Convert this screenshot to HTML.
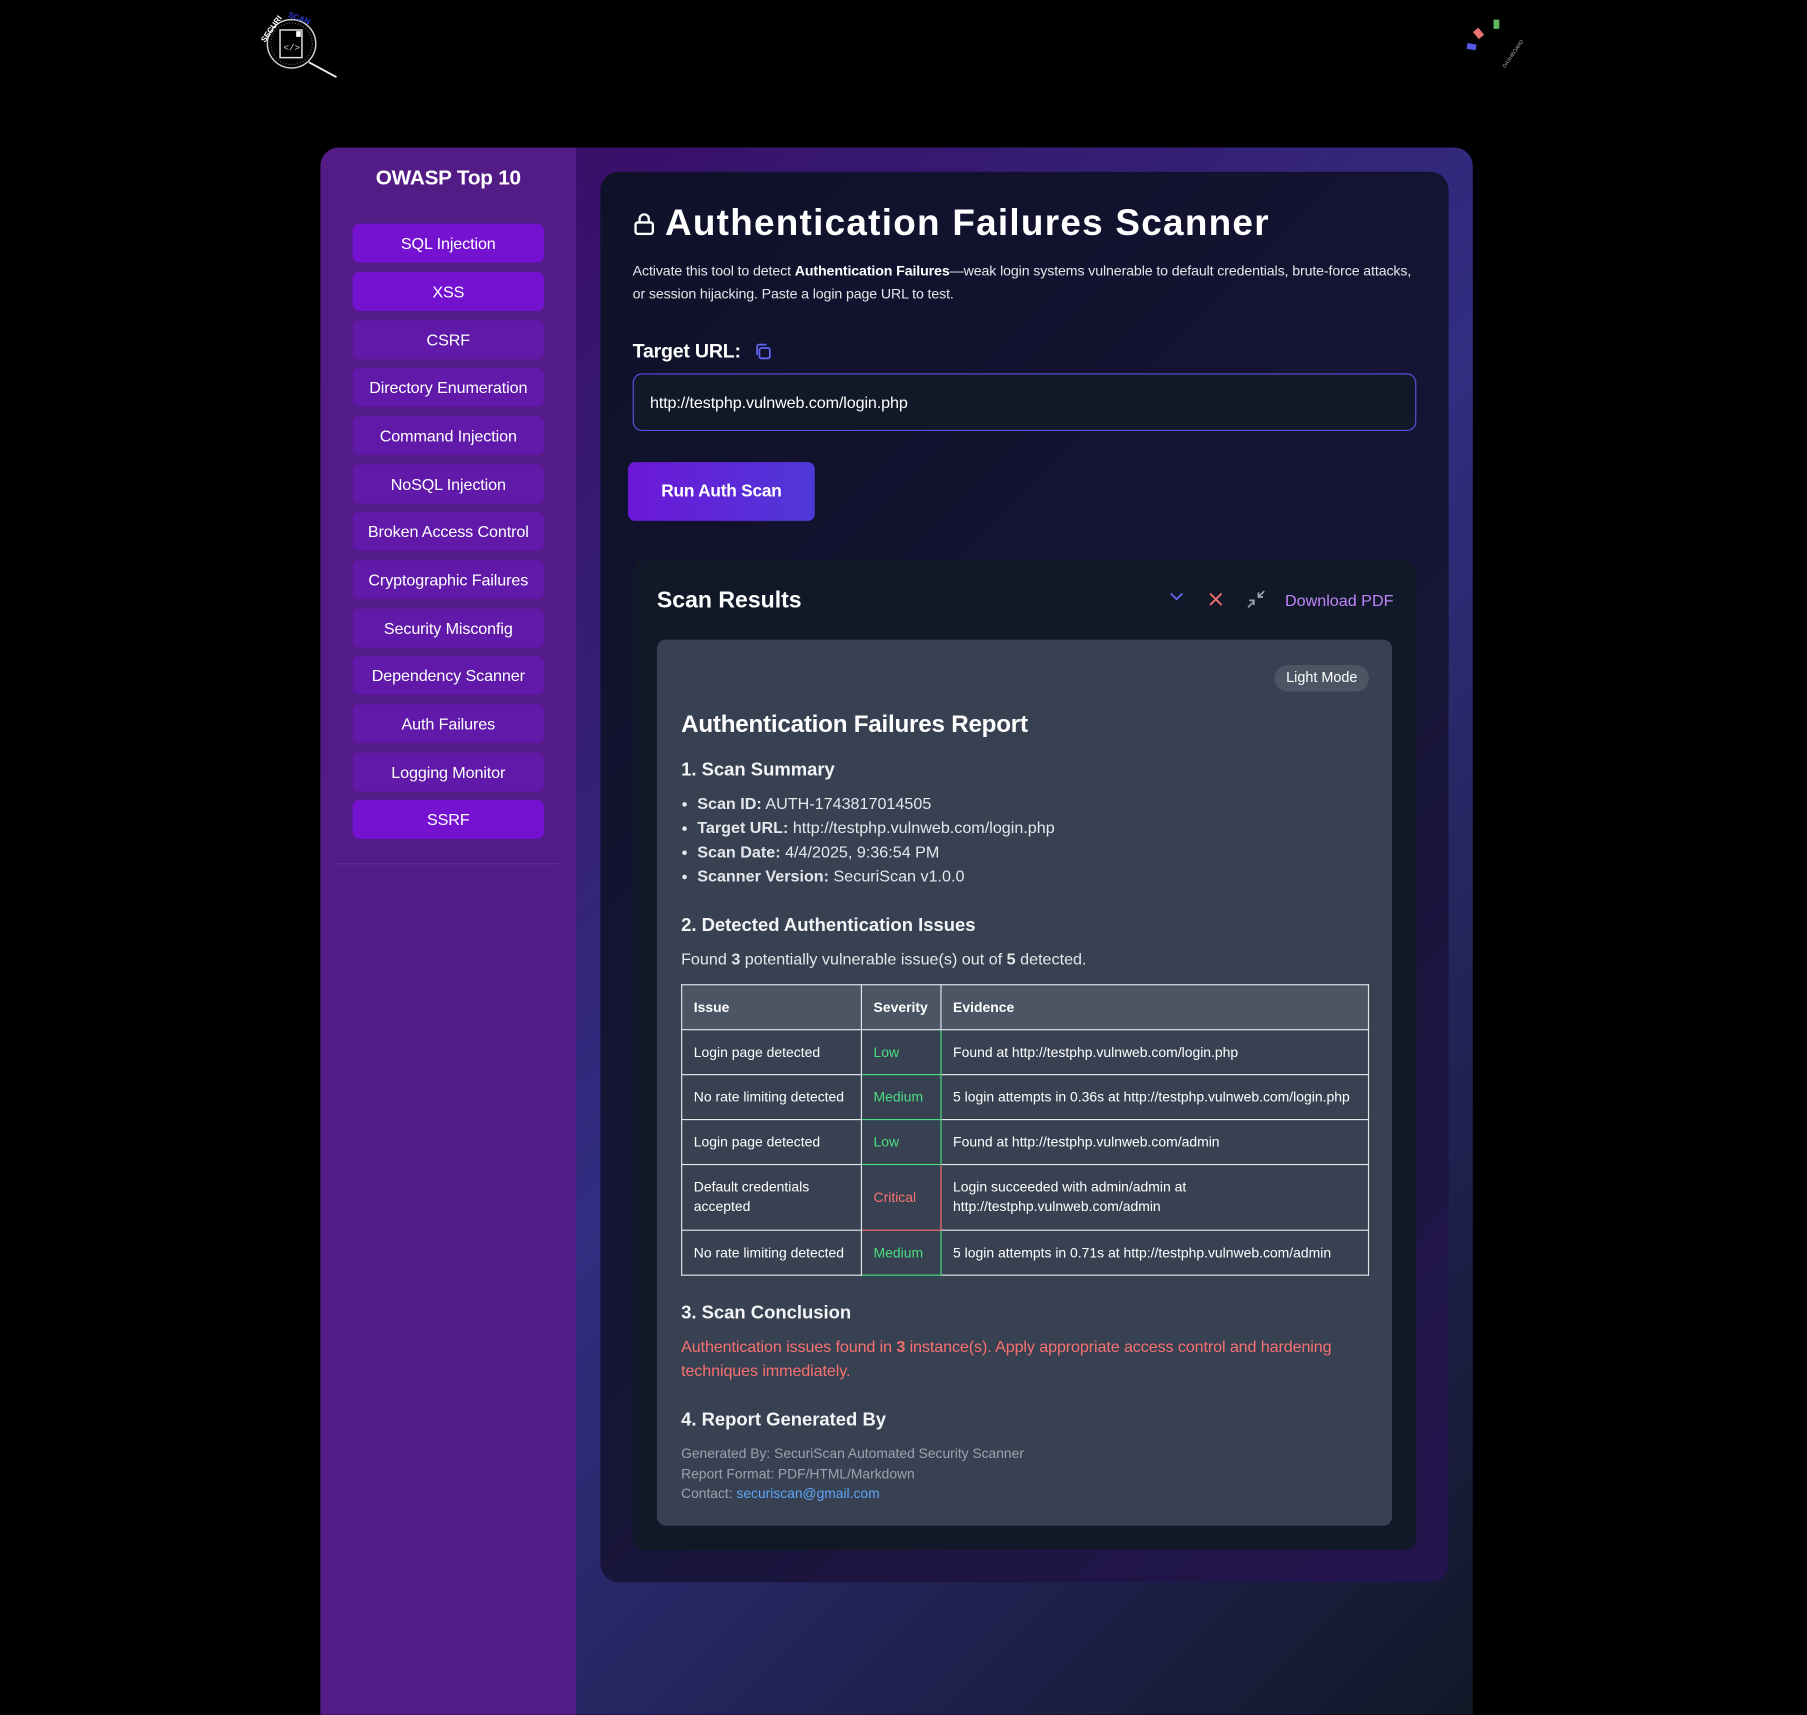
<!DOCTYPE html>
<html><head><meta charset="utf-8"><style>
*{box-sizing:border-box;margin:0;padding:0}
html,body{width:1807px;height:1702px;overflow:hidden;background:#000;font-family:"Liberation Sans",Arial,sans-serif;color:#fff}
#w{position:absolute;left:0;top:0;width:1568px;height:1477px;transform:scale(1.15242);transform-origin:0 0}
.a{position:absolute}
#box{left:278px;top:128px;width:1000px;height:1360px;border-radius:16px 16px 0 0;overflow:hidden;background:linear-gradient(135deg,#3b0764 0%,#312e81 50%,#111827 100%)}
#side{left:0;top:0;width:222px;height:100%;background:#521b85}
.btn{position:absolute;left:28px;width:166px;height:34px;border-radius:6px;background:#6019a8;font-size:14px;text-align:center;line-height:34px;letter-spacing:-0.1px}
.btn.b{background:#7412d0}
#card{left:243px;top:21px;width:736px;height:1224px;border-radius:16px;background:linear-gradient(135deg,#0f1129 0%,#171538 60%,#25154f 100%)}
table{border-collapse:collapse;font-size:12.1px;width:597px}
td,th{border:1px solid #e5e7eb;padding:0 10px;text-align:left;color:#fff}
th{background:#4b5563;height:39px;font-weight:bold}
td{height:39px;line-height:17px}
.g{color:#4ade80;border-color:#4ade80}
.r{color:#f87171;border-color:#f87171}
li{list-style:none;position:relative;padding-left:14px;height:21px;font-size:14px;color:#e5e7eb}
li:before{content:"";position:absolute;left:1px;top:7px;width:4px;height:4px;border-radius:50%;background:#e5e7eb}
h3{font-size:16px;font-weight:bold;color:#f3f4f6}
</style></head><body><div id="w">
<svg class="a" style="left:220px;top:4px" width="76" height="66" viewBox="0 0 76 66">
<circle cx="33" cy="34" r="21" fill="none" stroke="#ccc" stroke-width="1.3"/>
<circle cx="33" cy="34" r="18" fill="none" stroke="#666" stroke-width="0.8" stroke-dasharray="1 1.5"/>
<rect x="23" y="22" width="19" height="24" fill="none" stroke="#ddd" stroke-width="1.3"/>
<rect x="37" y="23" width="4" height="5" fill="#fff"/>
<text x="26" y="40" font-size="8" fill="#ddd" font-family="Liberation Mono">&lt;/&gt;</text>
<line x1="48" y1="50" x2="72" y2="63" stroke="#eee" stroke-width="1.6"/>
<text x="4" y="30" font-size="7" font-weight="bold" fill="#fff" transform="rotate(-55 10 26)">SECURI</text>
<text x="30" y="12" font-size="7" font-weight="bold" fill="#2b3bd0" transform="rotate(20 34 10)">SCAN</text>
</svg>
<svg class="a" style="left:1268px;top:12px" width="56" height="50" viewBox="0 0 56 50">
<rect x="28" y="5" width="5" height="8" fill="#5fb860"/>
<rect x="12" y="13" width="6" height="8" fill="#e9756e" transform="rotate(-40 15 17)"/>
<rect x="5" y="26" width="8" height="5" fill="#5558e8" transform="rotate(10 9 28)"/>
<text x="28" y="44" font-size="4.5" fill="#aaa" transform="rotate(-55 36 36)">DASHBOARD</text>
</svg>
<div id="box" class="a">
 <div id="side" class="a">
  <div class="a" style="left:0;width:222px;top:16px;text-align:center;font-size:18px;font-weight:bold;letter-spacing:-0.2px">OWASP Top 10</div>
  <div class="btn b" style="top:66px">SQL Injection</div>
  <div class="btn b" style="top:108px">XSS</div>
  <div class="btn" style="top:150px">CSRF</div>
  <div class="btn" style="top:191px">Directory Enumeration</div>
  <div class="btn" style="top:233px">Command Injection</div>
  <div class="btn" style="top:275px">NoSQL Injection</div>
  <div class="btn" style="top:316px">Broken Access Control</div>
  <div class="btn" style="top:358px">Cryptographic Failures</div>
  <div class="btn" style="top:400px">Security Misconfig</div>
  <div class="btn" style="top:441px">Dependency Scanner</div>
  <div class="btn" style="top:483px">Auth Failures</div>
  <div class="btn" style="top:525px">Logging Monitor</div>
  <div class="btn b" style="top:566px">SSRF</div>
  <div class="a" style="left:14px;top:621px;width:193px;height:1px;background:#6b2aa8"></div>
 </div>
 <div id="card" class="a">
  <svg class="a" style="left:29px;top:35px" width="18" height="20" viewBox="0 0 18 20"><rect x="1.5" y="9" width="15" height="10" rx="2" fill="none" stroke="#fff" stroke-width="2"/><path d="M5 9V6a4 4 0 0 1 8 0v3" fill="none" stroke="#fff" stroke-width="2"/></svg>
  <div class="a" style="left:56px;top:26px;font-size:32px;font-weight:bold;letter-spacing:1.1px;white-space:nowrap">Authentication Failures Scanner</div>
  <div class="a" style="left:28px;top:76px;width:682px;font-size:12.3px;letter-spacing:-0.1px;line-height:20px;color:#e5e7eb">Activate this tool to detect <b style="color:#fff">Authentication Failures</b>—weak login systems vulnerable to default credentials, brute-force attacks, or session hijacking. Paste a login page URL to test.</div>
  <div class="a" style="left:28px;top:146px;font-size:17px;font-weight:bold;letter-spacing:-0.2px">Target URL:</div>
  <svg class="a" style="left:133px;top:148px" width="16" height="16" viewBox="0 0 16 16"><rect x="5" y="5" width="9" height="9" rx="1.5" fill="none" stroke="#6366f1" stroke-width="1.5"/><path d="M3 11V3.5A1.5 1.5 0 0 1 4.5 2H11" fill="none" stroke="#6366f1" stroke-width="1.5"/></svg>
  <div class="a" style="left:28px;top:175px;width:680px;height:50px;border:1px solid #5b50e6;border-radius:8px;background:#111827;font-size:14px;line-height:48px;padding-left:14px;letter-spacing:-0.1px">http://testphp.vulnweb.com/login.php</div>
  <div class="a" style="left:24px;top:252px;width:162px;height:51px;border-radius:6px;background:linear-gradient(90deg,#6d18d8,#4f38d8);font-size:15px;font-weight:bold;text-align:center;line-height:51px;letter-spacing:-0.2px">Run Auth Scan</div>
  <div class="a" style="left:28px;top:337px;width:680px;height:859px;border-radius:10px;background:#111827">
   <div class="a" style="left:21px;top:24px;font-size:20px;font-weight:bold">Scan Results</div>
   <svg class="a" style="left:465px;top:27px" width="14" height="10" viewBox="0 0 14 10"><path d="M2 2l5 5 5-5" fill="none" stroke="#6366f1" stroke-width="1.6"/></svg>
   <svg class="a" style="left:499px;top:27px" width="14" height="14" viewBox="0 0 14 14"><path d="M2 2l10 10M12 2L2 12" stroke="#f87171" stroke-width="1.6"/></svg>
   <svg class="a" style="left:532px;top:25px" width="18" height="18" viewBox="0 0 18 18"><path d="M2 16l5-5M3 10h4v4M16 2l-5 5M11 3v4h4" fill="none" stroke="#9ca3af" stroke-width="1.5"/></svg>
   <div class="a" style="left:566px;top:27px;font-size:14px;color:#c084fc">Download PDF</div>
   <div class="a" style="left:21px;top:69px;width:638px;height:769px;border-radius:8px;background:#374151">
    <div class="a" style="left:536px;top:22px;width:82px;height:23px;border-radius:12px;background:#4b5563;font-size:12.5px;text-align:center;line-height:23px">Light Mode</div>
    <div class="a" style="left:21px;top:62px;font-size:21px;font-weight:bold;letter-spacing:-0.2px">Authentication Failures Report</div>
    <h3 class="a" style="left:21px;top:105px">1. Scan Summary</h3>
    <ul class="a" style="left:21px;top:134px;width:600px">
     <li><b>Scan ID:</b> AUTH-1743817014505</li>
     <li><b>Target URL:</b> http://testphp.vulnweb.com/login.php</li>
     <li><b>Scan Date:</b> 4/4/2025, 9:36:54 PM</li>
     <li><b>Scanner Version:</b> SecuriScan v1.0.0</li>
    </ul>
    <h3 class="a" style="left:21px;top:240px">2. Detected Authentication Issues</h3>
    <div class="a" style="left:21px;top:269px;font-size:14px;color:#e5e7eb">Found <b>3</b> potentially vulnerable issue(s) out of <b>5</b> detected.</div>
    <table class="a" style="left:21px;top:299px">
     <tr><th style="width:156px">Issue</th><th style="width:69px">Severity</th><th>Evidence</th></tr>
     <tr><td>Login page detected</td><td class="g">Low</td><td>Found at http://testphp.vulnweb.com/login.php</td></tr>
     <tr><td>No rate limiting detected</td><td class="g">Medium</td><td>5 login attempts in 0.36s at http://testphp.vulnweb.com/login.php</td></tr>
     <tr><td>Login page detected</td><td class="g">Low</td><td>Found at http://testphp.vulnweb.com/admin</td></tr>
     <tr><td style="height:57px">Default credentials accepted</td><td class="r">Critical</td><td>Login succeeded with admin/admin at http://testphp.vulnweb.com/admin</td></tr>
     <tr><td>No rate limiting detected</td><td class="g">Medium</td><td>5 login attempts in 0.71s at http://testphp.vulnweb.com/admin</td></tr>
    </table>
    <h3 class="a" style="left:21px;top:576px">3. Scan Conclusion</h3>
    <div class="a" style="left:21px;top:603px;width:600px;font-size:14px;line-height:21px;color:#f87171;letter-spacing:-0.1px">Authentication issues found in <b>3</b> instance(s). Apply appropriate access control and hardening techniques immediately.</div>
    <h3 class="a" style="left:21px;top:669px">4. Report Generated By</h3>
    <div class="a" style="left:21px;top:698px;font-size:12px;line-height:17.5px;color:#9ca3af">Generated By: SecuriScan Automated Security Scanner<br>Report Format: PDF/HTML/Markdown<br>Contact: <span style="color:#60a5fa">securiscan@gmail.com</span></div>
   </div>
  </div>
 </div>
</div>
</div></body></html>
